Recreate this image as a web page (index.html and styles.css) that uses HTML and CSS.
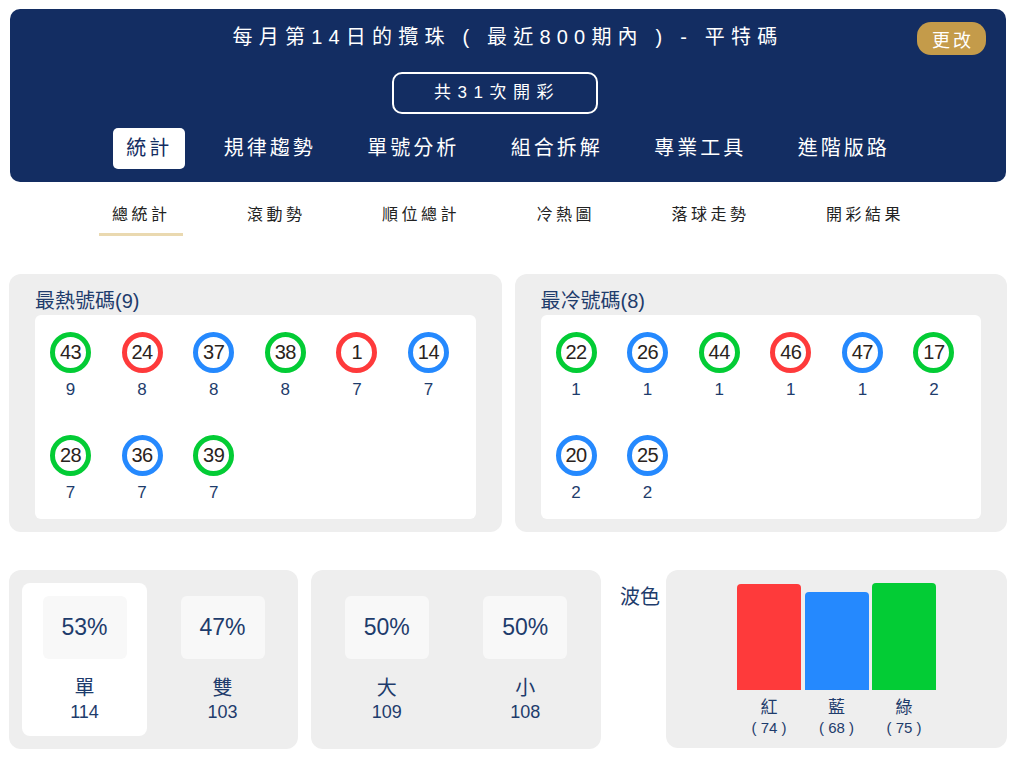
FILE: index.html
```html
<!DOCTYPE html>
<html lang="zh-Hant">
<head>
<meta charset="utf-8">
<title>平特碼統計</title>
<link rel="stylesheet" href="styles.css">
</head>
<body>
<div class="page">
  <header class="hero">
    <h1 class="title">每月第14日的攬珠 ( 最近800期內 ) - 平特碼</h1>
    <button class="change">更改</button>
    <div class="count-wrap"><div class="count">共31次開彩</div></div>
    <nav class="tabs">
      <a class="tab on">統計</a>
      <a class="tab">規律趨勢</a>
      <a class="tab">單號分析</a>
      <a class="tab">組合拆解</a>
      <a class="tab">專業工具</a>
      <a class="tab">進階版路</a>
    </nav>
  </header>

  <nav class="subtabs">
    <a class="sub on">總統計</a>
    <a class="sub">滾動勢</a>
    <a class="sub">順位總計</a>
    <a class="sub">冷熱圖</a>
    <a class="sub">落球走勢</a>
    <a class="sub">開彩結果</a>
  </nav>

  <section class="hotcold">
    <div class="panel">
      <h2 class="ptitle">最熱號碼(9)</h2>
      <div class="balls">
        <div class="cell"><span class="ball green">43</span><span class="cnt">9</span></div>
        <div class="cell"><span class="ball red">24</span><span class="cnt">8</span></div>
        <div class="cell"><span class="ball blue">37</span><span class="cnt">8</span></div>
        <div class="cell"><span class="ball green">38</span><span class="cnt">8</span></div>
        <div class="cell"><span class="ball red">1</span><span class="cnt">7</span></div>
        <div class="cell"><span class="ball blue">14</span><span class="cnt">7</span></div>
        <div class="cell"><span class="ball green">28</span><span class="cnt">7</span></div>
        <div class="cell"><span class="ball blue">36</span><span class="cnt">7</span></div>
        <div class="cell"><span class="ball green">39</span><span class="cnt">7</span></div>
      </div>
    </div>
    <div class="panel">
      <h2 class="ptitle">最冷號碼(8)</h2>
      <div class="balls">
        <div class="cell"><span class="ball green">22</span><span class="cnt">1</span></div>
        <div class="cell"><span class="ball blue">26</span><span class="cnt">1</span></div>
        <div class="cell"><span class="ball green">44</span><span class="cnt">1</span></div>
        <div class="cell"><span class="ball red">46</span><span class="cnt">1</span></div>
        <div class="cell"><span class="ball blue">47</span><span class="cnt">1</span></div>
        <div class="cell"><span class="ball green">17</span><span class="cnt">2</span></div>
        <div class="cell"><span class="ball blue">20</span><span class="cnt">2</span></div>
        <div class="cell"><span class="ball blue">25</span><span class="cnt">2</span></div>
      </div>
    </div>
  </section>

  <section class="bottom">
    <div class="stat s1">
      <div class="col on"><div class="pct">53%</div><div class="lbl">單</div><div class="num">114</div></div>
      <div class="col"><div class="pct">47%</div><div class="lbl">雙</div><div class="num">103</div></div>
    </div>
    <div class="stat s2">
      <div class="col"><div class="pct">50%</div><div class="lbl">大</div><div class="num">109</div></div>
      <div class="col"><div class="pct">50%</div><div class="lbl">小</div><div class="num">108</div></div>
    </div>
    <div class="wave-label">波色</div>
    <div class="wave">
      <div class="bcol"><div class="bar red-bg" style="height:106px"></div><div class="blbl">紅</div><div class="bval">( 74 )</div></div>
      <div class="bcol"><div class="bar blue-bg" style="height:98px"></div><div class="blbl">藍</div><div class="bval">( 68 )</div></div>
      <div class="bcol"><div class="bar green-bg" style="height:107px"></div><div class="blbl">綠</div><div class="bval">( 75 )</div></div>
    </div>
  </section>
</div>
</body>
</html>
```

FILE: styles.css
```css
* { box-sizing: border-box; }
html, body { margin: 0; padding: 0; background: #ffffff; }
body {
  font-family: "Liberation Sans", "Noto Sans CJK TC", sans-serif;
  color: #1e3c6c;
}
.page {
  width: 998px;
  padding-top: 9px;
  margin-left: 9px;
}

/* Header */
.hero {
  position: relative;
  margin: 0 1px;
  background: #132d62;
  border-radius: 10px;
  padding: 14px 0 13px;
}
.title {
  margin: 0;
  font-size: 20px;
  font-weight: normal;
  line-height: 28px;
  letter-spacing: 6.2px;
  color: #ffffff;
  text-align: center;
}
.change {
  position: absolute;
  top: 13px;
  right: 20px;
  width: 69px;
  height: 33px;
  border: none;
  border-radius: 14px;
  background: #c49b4a;
  color: #ffffff;
  font-family: "Liberation Sans", "Noto Sans CJK TC", sans-serif;
  font-size: 18px;
  letter-spacing: 3px;
  padding: 0 0 0 3px;
}
.count-wrap {
  display: flex;
  justify-content: center;
  margin-top: 21px;
  padding-right: 26px;
}
.count {
  width: 206px;
  height: 42px;
  border: 2px solid #ffffff;
  border-radius: 10px;
  color: #ffffff;
  font-size: 17px;
  letter-spacing: 6.5px;
  line-height: 38px;
  text-align: center;
  padding-left: 4px;
}
.tabs {
  display: flex;
  justify-content: center;
  gap: 25.5px;
  margin-top: 14px;
}
.tab {
  height: 41px;
  line-height: 41px;
  padding: 0 13px;
  font-size: 20px;
  letter-spacing: 3px;
  color: #ffffff;
  border-radius: 5px;
}
.tab.on {
  background: #ffffff;
  color: #132d62;
}

/* Sub tabs */
.subtabs {
  display: flex;
  justify-content: center;
  gap: 50.5px;
  margin-top: 18px;
}
.sub {
  padding: 3px 13px 6px 13px;
  line-height: 24px;
  font-size: 16px;
  letter-spacing: 3.5px;
  color: #222222;
  border-bottom: 3px solid transparent;
}
.sub.on { border-bottom-color: #ead9b0; }

/* Hot / cold */
.hotcold {
  display: flex;
  gap: 13px;
  margin-top: 38px;
}
.panel {
  flex: 1;
  background: #eeeeee;
  border-radius: 12px;
  padding: 15px 26px 13px;
}
.ptitle {
  margin: 0 0 2px;
  font-size: 20px;
  line-height: 24px;
  font-weight: normal;
  color: #1e3c6c;
}
.balls {
  background: #ffffff;
  border-radius: 6px;
  padding: 17px 15px 15px;
  display: flex;
  flex-wrap: wrap;
  column-gap: 30.6px;
  row-gap: 33.5px;
  min-height: 203px;
  align-content: flex-start;
}
.cell {
  width: 41px;
  display: flex;
  flex-direction: column;
  align-items: center;
}
.ball {
  display: block;
  width: 41px;
  height: 41px;
  border: 5px solid;
  border-radius: 50%;
  font-size: 20px;
  line-height: 31px;
  text-align: center;
  color: #2a2320;
  letter-spacing: -0.5px;
}
.ball.green { border-color: #03cc35; }
.ball.red { border-color: #fe3a3b; }
.ball.blue { border-color: #2589fe; }
.cnt {
  margin-top: 6px;
  font-size: 17px;
  line-height: 22px;
  color: #1e3c6c;
}

/* Bottom */
.bottom {
  display: flex;
  align-items: flex-start;
  margin-top: 38px;
}
.stat {
  display: flex;
  gap: 13px;
  background: #eeeeee;
  border-radius: 12px;
  padding: 13px;
}
.s1 { width: 289px; }
.s2 { width: 290px; margin-left: 13px; }
.col {
  flex: 1;
  display: flex;
  flex-direction: column;
  align-items: center;
  border-radius: 8px;
  padding: 13px 0;
}
.col.on { background: #ffffff; }
.pct {
  width: 84px;
  height: 63px;
  background: #f8f8f8;
  border-radius: 6px;
  font-size: 23px;
  line-height: 63px;
  text-align: center;
  color: #1e3c6c;
}
.lbl {
  margin-top: 16px;
  font-size: 20px;
  line-height: 26px;
}
.num {
  font-size: 18px;
  line-height: 22px;
}
.wave-label {
  width: 40px;
  margin: 15px 6px 0 19px;
  font-size: 20px;
  line-height: 24px;
  white-space: nowrap;
}
.wave {
  width: 341px;
  display: flex;
  justify-content: center;
  gap: 3.5px;
  background: #eeeeee;
  border-radius: 12px;
  padding: 13px 0 11px;
}
.bcol {
  width: 64px;
  height: 154px;
  display: flex;
  flex-direction: column;
  justify-content: flex-end;
  align-items: center;
}
.bar {
  width: 64px;
  border-radius: 4px 4px 0 0;
}
.red-bg { background: #fe3a3b; }
.blue-bg { background: #2589fe; }
.green-bg { background: #03cc35; }
.blbl {
  margin-top: 7px;
  font-size: 17px;
  line-height: 22px;
}
.bval {
  font-size: 15px;
  line-height: 18px;
}
```
